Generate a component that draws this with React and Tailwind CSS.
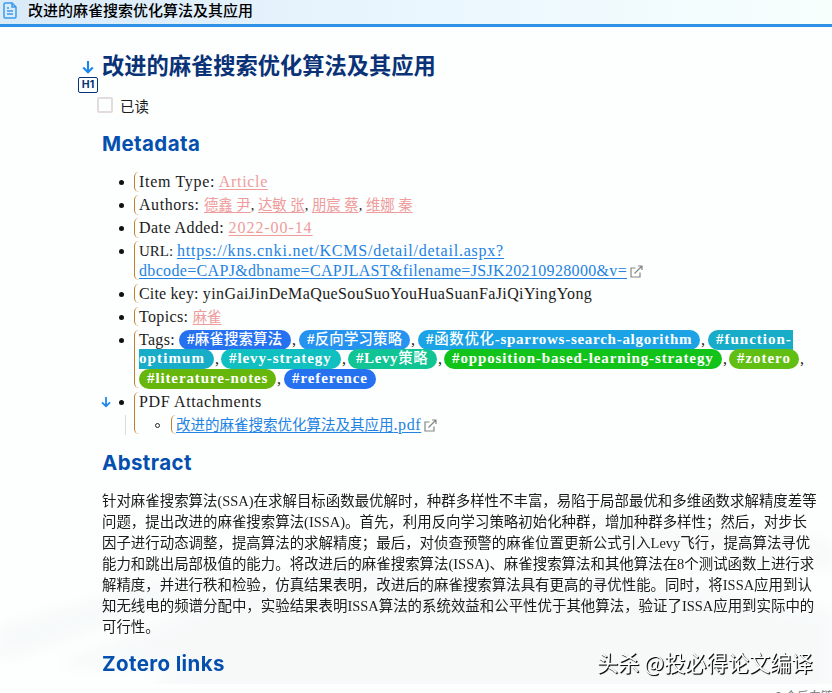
import clsx from 'clsx';

const tags = [
    [
        { text: '麻雀搜索算法', prefix: '#', color: 'bg-[#2671f0]', shape: 'rounded-full px-2', width: 'w-[112px]', tracking: 'tracking-[0.2px]' },
        { text: '反向学习策略', prefix: '#', color: 'bg-[#2693f0]', shape: 'rounded-full px-2', width: 'w-[111px]', tracking: 'tracking-[0.2px]' },
        { text: '函数优化', prefix: '#', suffix: '-sparrows-search-algorithm', color: 'bg-[#1ba3e6]', shape: 'rounded-full px-2', width: 'w-[282px]', tracking: 'tracking-[0.73px]' },
        { prefix: '#function-', color: 'bg-[#17adc8]', shape: 'rounded-l-full pl-2', width: 'w-[85px]', tracking: 'tracking-[1px]' },
    ],
    [
        { prefix: 'optimum', color: 'bg-[#17adc8]', shape: 'rounded-r-full pr-2', width: 'w-[75px]', tracking: 'tracking-[1.1px]' },
        { prefix: '#levy-strategy', color: 'bg-[#10c0c0]', shape: 'rounded-full px-2', width: 'w-[120px]', tracking: 'tracking-[0.9px]' },
        { text: '策略', prefix: '#Levy', color: 'bg-[#10c494]', shape: 'rounded-full px-2', width: 'w-[89px]', tracking: 'tracking-[0.6px]' },
        { prefix: '#opposition-based-learning-strategy', color: 'bg-[#12c41a]', shape: 'rounded-full px-2', width: 'w-[278px]', tracking: 'tracking-[0.88px]' },
        { prefix: '#zotero', color: 'bg-[#60bf12]', shape: 'rounded-full px-2', width: 'w-[70px]', tracking: 'tracking-[0.95px]' },
    ],
    [
        { prefix: '#literature-notes', color: 'bg-[#67b60b]', shape: 'rounded-full px-2', width: 'w-[137px]', tracking: 'tracking-[0.88px]' },
        { prefix: '#reference', color: 'bg-[#2671f0]', shape: 'rounded-full px-2', width: 'w-[92px]', tracking: 'tracking-[0.9px]' },
    ],
];

const abstractLines = [
    '针对麻雀搜索算法(SSA)在求解目标函数最优解时，种群多样性不丰富，易陷于局部最优和多维函数求解精度差等',
    '问题，提出改进的麻雀搜索算法(ISSA)。首先，利用反向学习策略初始化种群，增加种群多样性；然后，对步长',
    '因子进行动态调整，提高算法的求解精度；最后，对侦查预警的麻雀位置更新公式引入Levy飞行，提高算法寻优',
    '能力和跳出局部极值的能力。将改进后的麻雀搜索算法(ISSA)、麻雀搜索算法和其他算法在8个测试函数上进行求',
    '解精度，并进行秩和检验，仿真结果表明，改进后的麻雀搜索算法具有更高的寻优性能。同时，将ISSA应用到认',
    '知无线电的频谱分配中，实验结果表明ISSA算法的系统效益和公平性优于其他算法，验证了ISSA应用到实际中的',
    '可行性。',
];

function DownArrow({ className }) {
    return (
        <svg className={className} viewBox="0 0 12 14" fill="none" stroke="#1a86ee" strokeWidth="2.1">
            <path d="M6 1v11M1.2 7.4 6 12.2l4.8-4.8" />
        </svg>
    );
}

function ExternalIcon() {
    return (
        <svg className="ml-[3px] inline-block h-[13px] w-[13px] align-[-2px]" viewBox="0 0 13 13" fill="none" stroke="#858585" strokeWidth="1.2">
            <path d="M5.5 3H1v9h9V7.5M4.5 8.5 12 1M8 1h4v4" />
        </svg>
    );
}

// faint snowy slopes behind the lower half of the note
function Backdrop() {
    return (
        <svg className="absolute inset-x-0 bottom-0 h-[190px] w-full" viewBox="0 0 832 190" preserveAspectRatio="none">
            <defs>
                <filter id="soft">
                    <feGaussianBlur stdDeviation="8" />
                </filter>
            </defs>
            <g filter="url(#soft)" fill="#f4f6f6">
                <path d="M0 135 90 110 160 85 235 65 180 100 90 135 0 165Z" opacity=".7" />
                <path d="M55 172 130 145 230 100 330 70 460 90 600 80 832 120V200H150L180 170Z" opacity=".7" />
                <path d="M500 5 640 35 740 30 832 50V75L700 60 600 45Z" opacity=".5" />
            </g>
        </svg>
    );
}

function Item({ children, hollow }) {
    return (
        <li className="relative rounded-[5px] border-l border-[#c17f2a] pl-1">
            <span
                className={clsx(
                    'absolute top-[8px] size-[5px] rounded-full',
                    hollow ? '-left-[17px] border border-[#222]' : '-left-[16px] bg-[#111]'
                )}
            />
            {children}
        </li>
    );
}

function Pink({ children, className }) {
    return <a className={clsx('text-[#ee9c9c] underline underline-offset-2', className)}>{children}</a>;
}

function Heading({ children, className }) {
    return (
        <h2 className={clsx('font-[Inter,sans-serif] text-[20.5px] leading-[26px] font-bold tracking-[0.38px] text-[#0550ae]', className)}>
            {children}
        </h2>
    );
}

export default function App() {
    return (
        <div className="relative flex h-[693px] w-[832px] flex-col overflow-hidden bg-[#fdfefe] font-['Liberation_Serif','Noto_Sans_CJK_SC',serif] text-[#1b1b1b]">
            <header className="flex h-[27px] shrink-0 items-center border-b-[3px] border-[#2d91e5] bg-linear-to-r from-[#d9eaf8] via-[#eaf6fe] to-[#f7fffd] pb-[3px]">
                <svg className="ml-[3px] h-[17px] w-[14px]" viewBox="0 0 14 17" fill="none" stroke="#3d9bea" strokeWidth="1.5">
                    <path d="M9 1H2.2C1.5 1 1 1.5 1 2.2v12.6c0 .7.5 1.2 1.2 1.2h9.6c.7 0 1.2-.5 1.2-1.2V5L9 1v4h4M4 6h2M4 9h6M4 12h6" />
                </svg>
                <span className="ml-[11px] font-['Noto_Sans_CJK_SC',sans-serif] text-[15px] font-medium text-black">
                    改进的麻雀搜索优化算法及其应用
                </span>
            </header>

            <main className="relative flex h-[657px] shrink-0 flex-col pl-[102px]">
                <Backdrop />
                <div className="relative mt-[20px] h-[34px]">
                    <DownArrow className="absolute top-[13px] -left-[20px] h-[14px] w-[12px]" />
                    <span className="absolute top-[30px] -left-[24px] flex h-[16px] w-[20px] items-center justify-center rounded-[2px] border border-[#0a3277] font-[Inter,sans-serif] text-[10.5px] font-bold text-[#0a3277]">
                        H1
                    </span>
                    <h1 className="font-['Noto_Sans_CJK_SC',sans-serif] text-[22.25px] leading-[34px] font-bold text-[#0a3277]">
                        改进的麻雀搜索优化算法及其应用
                    </h1>
                </div>
                <div className="-ml-[5px] mt-[15px] flex h-[20px] items-center">
                    <span className="mb-[3px] size-4 rounded-[2px] border-2 border-[#e2dcdf]" />
                    <span className="mt-[4px] ml-[7px] text-[14.4px]">已读</span>
                </div>
                <Heading className="mt-[15px]">Metadata</Heading>

                <ul className="relative mt-[15px] ml-[32px] flex flex-col gap-[3.3px] text-[16px] leading-[19.7px] whitespace-nowrap">
                    <Item>
                        <span className="tracking-[0.68px]">Item Type: <Pink>Article</Pink></span>
                    </Item>
                    <Item>
                        <span className="tracking-[0.55px]">Authors: </span>
                        <span className="text-[14.4px] leading-none">
                            <Pink>德鑫 尹</Pink>, <Pink>达敏 张</Pink>, <Pink>朋宸 蔡</Pink>, <Pink>维娜 秦</Pink>
                        </span>
                    </Item>
                    <Item>
                        <span className="tracking-[0.43px]">Date Added: <Pink className="tracking-[0.93px]">2022-00-14</Pink></span>
                    </Item>
                    <Item>
                        <span className="text-[15px] leading-none">URL: </span>
                        <a className="text-[#2383e2] underline underline-offset-2">
                            <span className="tracking-[0.78px]">https://kns.cnki.net/KCMS/detail/detail.aspx?</span>
                            <br />
                            <span className="tracking-[0.33px]">dbcode=CAPJ&amp;dbname=CAPJLAST&amp;filename=JSJK20210928000&amp;v=</span>
                        </a>
                        <ExternalIcon />
                    </Item>
                    <Item>
                        <span className="tracking-[0.16px]">Cite key: </span>
                        <span className="tracking-[0.4px]">yinGaiJinDeMaQueSouSuoYouHuaSuanFaJiQiYingYong</span>
                    </Item>
                    <Item>
                        <span className="tracking-[0.35px]">Topics: </span>
                        <Pink className="text-[14.4px] leading-none">麻雀</Pink>
                    </Item>
                    <Item>
                        {tags.map((row, i) => (
                            <div key={i} className="flex h-[19.6px]">
                                {i === 0 && <span className="w-[40px] tracking-[0.3px]">Tags:</span>}
                                {row.map((tag, j) => (
                                    <span key={j} className="flex">
                                        <span className={clsx('h-[20px] text-[15px] font-bold text-white', tag.color, tag.shape, tag.width, tag.tracking)}>
                                            {tag.prefix}
                                            {tag.text && <span className="text-[14.4px] leading-none font-medium">{tag.text}</span>}
                                            {tag.suffix}
                                        </span>
                                        {!(i === 0 && j === 3) && !(i === 2 && j === 1) && (
                                            <span className={clsx('pl-px', i === 1 ? 'w-[7px]' : 'w-[8px]')}>,</span>
                                        )}
                                    </span>
                                ))}
                            </div>
                        ))}
                    </Item>
                    <Item>
                        <DownArrow className="absolute top-[4px] -left-[34px] h-[12px] w-[10px]" />
                        <span className="absolute top-[23px] -left-[10px] h-[20px] w-px bg-[#dcdcdc]" />
                        <span className="tracking-[0.63px]">PDF Attachments</span>
                        <ul className="mt-[3.3px] ml-[32px]">
                            <Item hollow>
                                <a className="text-[14.5px] leading-none text-[#2383e2] underline underline-offset-2">
                                    改进的麻雀搜索优化算法及其应用<span className="text-[16px] tracking-[0.6px]">.pdf</span>
                                </a>
                                <ExternalIcon />
                            </Item>
                        </ul>
                    </Item>
                </ul>

                <Heading className="relative mt-[16px]">Abstract</Heading>
                <div className="relative mt-[15px] text-[14.44px] leading-[21px] whitespace-nowrap">
                    {abstractLines.map((line) => (
                        <p key={line}>{line}</p>
                    ))}
                </div>
                <Heading className="relative mt-[13px]">Zotero links</Heading>
            </main>

            <footer className="flex h-[9px] shrink-0 items-start overflow-hidden pl-[775px] font-['Liberation_Sans','Noto_Sans_CJK_SC',sans-serif] text-[12px] leading-[26px] whitespace-nowrap text-[#777]">
                0 个反向链接
            </footer>
            <div className="absolute top-[648px] left-[597px] font-['Noto_Sans_CJK_SC',sans-serif] text-[21.2px] leading-[28px] whitespace-nowrap text-white [text-shadow:1px_1px_0_#111,1px_1px_1px_#333]">
                头杀 @投必得论文编译
            </div>
        </div>
    );
}
